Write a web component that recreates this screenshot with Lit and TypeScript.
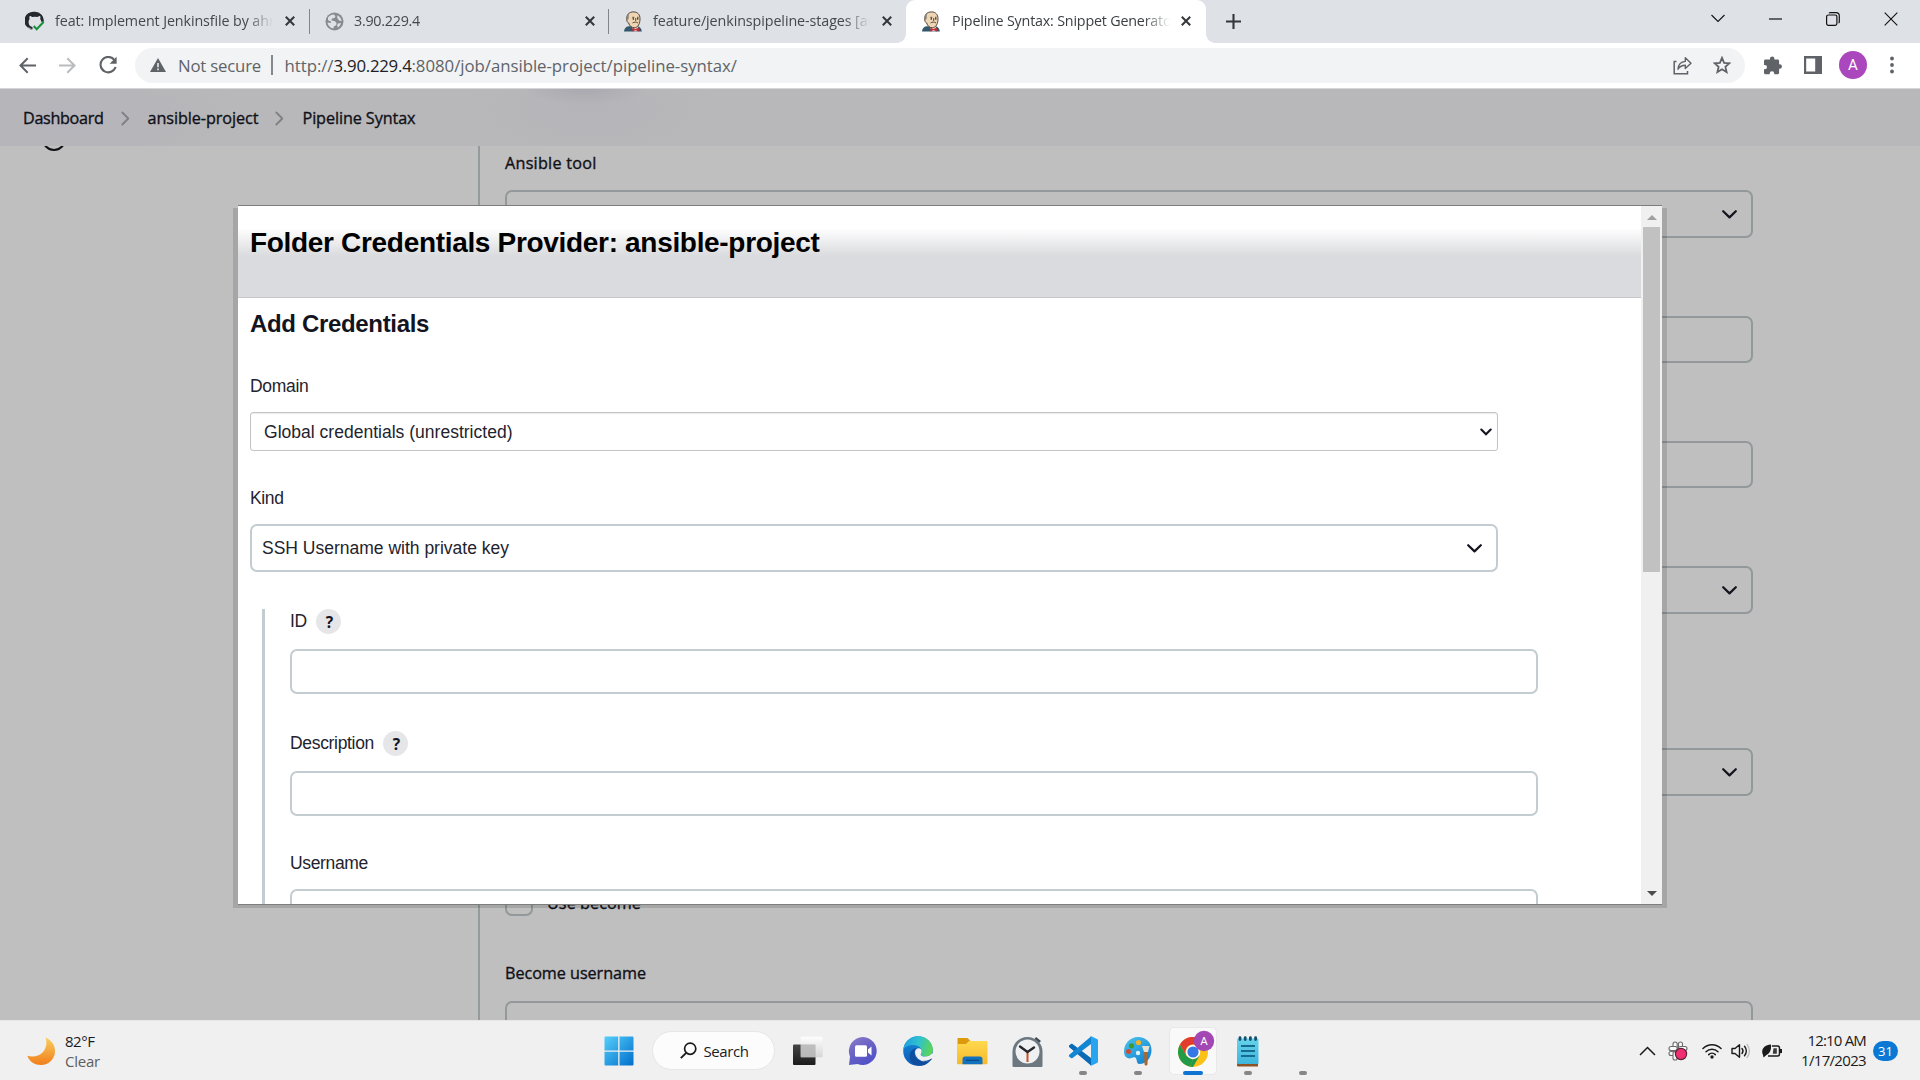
import { LitElement, html, css, svg, nothing } from "lit";
import { customElement, property } from "lit/decorators.js";

/** A single line of text whose tracking is adjusted so that it spans `w` pixels. */
@customElement("fit-text")
class FitText extends LitElement {
  @property({ type: Number }) w = 0;
  static styles = css`
    :host { display: inline-block; white-space: pre; }
    .t { display: inline-block; }
  `;
  firstUpdated() {
    if (!this.w) return;
    const n = (this.textContent ?? "").length;
    const el = this.renderRoot.querySelector(".t") as HTMLElement;
    const natural = el.getBoundingClientRect().width;
    if (n > 1 && natural > 0) this.style.letterSpacing = `${((this.w - natural) / n).toFixed(3)}px`;
  }
  render() {
    return html`<span class="t"><slot></slot></span>`;
  }
}

const icon = (w: number, h: number, body: unknown, box = `0 0 ${w} ${h}`) =>
  html`<svg width=${w} height=${h} viewBox=${box} fill="none" style="display:block;flex:none">${body}</svg>`;

const chevDown = icon(15, 9, svg`<path d="M1.2 1.2 7.5 7.4 13.8 1.2" stroke="#14141f" stroke-width="2.2" stroke-linecap="round" stroke-linejoin="round"/>`);
const chevSmall = icon(12, 8, svg`<path d="M1.3 1.5 6 6.2 10.7 1.5" stroke="#14141f" stroke-width="2.1" stroke-linecap="round"/>`);
const crumbChev = icon(9, 15, svg`<path d="M1.3 1.5 7.3 7.5 1.3 13.5" stroke="#7f7f86" stroke-width="1.8" stroke-linecap="round" stroke-linejoin="round"/>`);
const tabClose = icon(10, 10, svg`<path d="M.8.8 9.2 9.2M9.2.8.8 9.2" stroke="#33373b" stroke-width="2"/>`);

const github = icon(20, 20, svg`
  <path d="M7 18.3c-1.2.3-2.3 0-3-.8-.6-.8-1-1.6-1.8-1.9M10 .8A9 9 0 0 0 6.8 18.6c.5.1.7-.2.7-.5v-2c-2.2-.6-3.9-1.6-3.9-5.3 0-1.200.4-2.100 1-2.800-.2-.6-.4-1.800.1-2.900.9 0 1.900.5 2.600 1a9.500 9.500 0 0 1 5.200 0c.8-.5 1.700-1 2.600-1 .5 1.100.3 2.300.1 2.900.6.7 1 1.600 1 2.800l2.600 0A9 9 0 0 0 10 .8Z" fill="#24292f"/>
  <path d="m8.700 15 3 3.200 7-7.400" stroke="#1a8f3c" stroke-width="2.100"/>`);
const globe = icon(19, 19, svg`
  <circle cx="9.500" cy="9.500" r="9" fill="#868b90"/>
  <path d="M3 5.500C4.500 3.600 6.700 2.600 9 2.500l1.500 1.700-1 1.800-2.500.6-.6 2 3.200.5 2 1.800-.4 2.300-2.200 1.100-.6 2.200C5.500 16.300 3 13.600 2.500 10.500l3.400.6L6 9.400 3 8.200ZM12 3.200c2.600 1 4.300 3.100 4.700 5.800l-2.200-.3-2-2.200ZM13 11.500l3-.4c-.5 1.900-1.500 3.300-3 4.300l-.9-1.800Z" fill="#dee1e6"/>`);
const jenkins = icon(20, 21, svg`
  <path d="M1 20.500c.2-3 1.800-4.800 4.500-5.200h9c2.500.4 4 2.200 4.300 5.200Z" fill="#33576b"/>
  <path d="M8 14.500h7l-.5 5.800H11Z" fill="#f3efe9"/>
  <path d="M3.800 7.800C3.600 3.500 6.300.9 10.500.9c4.200 0 6.500 2.800 6.500 6.800 0 4.800-1.800 9-5.600 9-3 0-5-1.900-5.700-4.700-1.500-.5-2.200-2.600-1.900-4.200Z" fill="#eed6b4" stroke="#42362f" stroke-width=".9"/>
  <path d="M3.800 8C3 4.500 4.800 2.300 7 1.600 5.600 3.300 5.600 5.300 5.800 7.300L4.700 8.900Z" fill="#8b8179"/>
  <path d="M9.300 6.300h2M14 6.300h1.500M12.700 7v3M9.500 12c1.700-1.200 4-1.200 5.500 0" stroke="#5a463a" stroke-width="1"/>
  <circle cx="10.300" cy="7.900" r=".8" fill="#2e2b2b"/><circle cx="14.800" cy="7.900" r=".8" fill="#2e2b2b"/>
  <path d="m9.500 16.600 3 1.500 3.200-1.500.2 3.800-3.400-1.200-3 1.200Z" fill="#cc2f33"/>`);

interface Tab { icon: unknown; title: string; w: number; kind: string; }
const TABS: Tab[] = [
  { icon: github, title: "feat: Implement Jenkinsfile by ahm", w: 227, kind: "t1" },
  { icon: globe, title: "3.90.229.4", w: 66, kind: "t2" },
  { icon: jenkins, title: "feature/jenkinspipeline-stages [ans", w: 230, kind: "t3" },
  { icon: jenkins, title: "Pipeline Syntax: Snippet Generator", w: 225, kind: "t4" },
];

@customElement("browser-chrome")
class BrowserChrome extends LitElement {
  static styles = css`
    :host, * { box-sizing: border-box; }
    :host { display: block; flex: none; height: 89px; font-family: "Open Sans", "Noto Sans", sans-serif; }
    .strip { height: 43px; background: #dee1e6; display: flex; align-items: stretch; }
    .tab { display: flex; align-items: center; height: 43px; padding-bottom: 1px; position: relative; }
    .fav { width: 20px; display: flex; justify-content: center; }
    .title { width: 218px; margin: 0 12px 0 11px; overflow: hidden; font-size: 14.3px; color: #45494d; line-height: 22px; height: 22px;
      -webkit-mask-image: linear-gradient(90deg, #000 88%, transparent); mask-image: linear-gradient(90deg, #000 88%, transparent); }
    .t1 { width: 310px; padding-left: 25px; }
    .t1 .title { margin-left: 10px; }
    .t2 { width: 299px; padding-left: 14px; }
    .t2 .title { margin-left: 10px; width: 219px; }
    .t3 { width: 297px; padding-left: 14px; }
    .t3 .title { margin-left: 10px; width: 217px; }
    .t4 { width: 300px; padding-left: 15px; background: #fff; border-radius: 9px 9px 0 0; }
    .t4::before, .t4::after { content: ""; position: absolute; bottom: 0; width: 9px; height: 9px; }
    .t4::before { left: -9px; background: radial-gradient(circle at 0 0, transparent 8.5px, #fff 9px); }
    .t4::after { right: -9px; background: radial-gradient(circle at 9px 0, transparent 8.500px, #fff 9px); }
    .sep { width: 1px; height: 25px; background: #80868b; margin: 9px 0 0 -1px; }
    .t4 .title { color: #3c4043; margin-right: 11px; }
    .plus { margin: 14px 0 0 20px; }
    .win { margin-left: auto; display: flex; align-items: center; height: 37px; padding-right: 22px; gap: 44px; }
    .bar { height: 46px; background: #fff; border-bottom: 1px solid #d5d6d8; display: flex; align-items: center; padding: 0 22px 1px 19px; }
    .nav { display: flex; gap: 23px; align-items: center; width: 116px; }
    .pill { height: 35px; width: 1610px; border-radius: 18px; background: #f1f3f4; display: flex; align-items: center; padding: 0 14px 0 15px; font-size: 16.8px; color: #5f6368; }
    .ns { margin-left: 12px; }
    .vb { width: 1.500px; height: 20px; background: #85898d; margin: 0 12px 0 10px; }
    .url b { font-weight: 400; color: #202124; }
    .pa { margin-left: auto; display: flex; align-items: center; gap: 21px; }
    .right { display: flex; align-items: center; margin-left: 18px; gap: 22px; }
    .av { width: 28px; height: 28px; border-radius: 50%; background: #ab47bc; color: #fff; font: 15px Roboto, sans-serif; display: flex; align-items: center; justify-content: center; margin: 0 6px 0 -5px; }
    .dots { margin-left: -5px; }
  `;
  render() {
    return html`
      <div class="strip">
        ${TABS.map((t, i) => html`
          <div class="tab ${t.kind}">
            <div class="fav">${t.icon}</div>
            <div class="title"><fit-text .w=${t.w}>${t.title}</fit-text></div>
            ${tabClose}
          </div>
          ${i < 2 ? html`<div class="sep"></div>` : nothing}`)}
        <div class="plus">${icon(15, 15, svg`<path d="M7.500 0v15M0 7.500h15" stroke="#33373b" stroke-width="2.100"/>`)}</div>
        <div class="win">
          ${icon(14, 9, svg`<path d="M.5 1 7 7.500 13.500 1" stroke="#111" stroke-width="1.100"/>`)}
          ${icon(13, 2, svg`<path d="M0 1h13" stroke="#111" stroke-width="1.200"/>`)}
          ${icon(14, 14, svg`<rect x=".6" y="3" width="10.300" height="10.300" rx="1.800" stroke="#111" stroke-width="1.200"/><path d="M3 1.200C3.500.7 4 .6 4.600.6H10a3.300 3.300 0 0 1 3.300 3.300V9.500c0 .7-.2 1.200-.7 1.600" stroke="#111" stroke-width="1.200"/>`)}
          ${icon(14, 14, svg`<path d="m.7.7 12.600 12.600M13.300.7.7 13.300" stroke="#111" stroke-width="1.100"/>`)}
        </div>
      </div>
      <div class="bar">
        <div class="nav">
          ${icon(17, 17, svg`<path d="M17 8.500H1.800M8.700 1.300 1.500 8.500l7.200 7.200" stroke="#5f6368" stroke-width="2"/>`)}
          ${icon(17, 17, svg`<path d="M0 8.500h15.200M8.300 1.300l7.200 7.200-7.200 7.200" stroke="#babcbe" stroke-width="2"/>`)}
          ${icon(18, 18, svg`<path d="M15.300 3.800A7.700 7.700 0 1 0 16.600 11" stroke="#5f6368" stroke-width="2.100"/><path d="M17.600.8v7h-7Z" fill="#5f6368"/>`)}
        </div>
        <div class="pill">
          ${icon(16, 14, svg`<path d="M8 0 16 14H0Z" fill="#5f6368"/><path d="M8 5v4.200M8 10.500v1.700" stroke="#f1f3f4" stroke-width="1.500"/>`)}
          <fit-text class="ns" .w=${83}>Not secure</fit-text>
          <div class="vb"></div>
          <span class="url"><fit-text .w=${49}>http://</fit-text><b><fit-text .w=${78}>3.90.229.4</fit-text></b><fit-text .w=${325.5}>:8080/job/ansible-project/pipeline-syntax/</fit-text></span>
          <div class="pa">
            ${icon(19, 19, svg`<path d="M3.500 5.500H1.200v12.300h13.300V15" stroke="#5f6368" stroke-width="1.500"/><path d="M5 13.200C5.300 8.500 8 5.800 12.300 5.400V1.800l5.700 5.500-5.700 5.300V9.300C9.200 9.300 6.800 10.500 5 13.200Z" stroke="#5f6368" stroke-width="1.400" stroke-linejoin="round"/>`)}
            ${icon(18, 18, svg`<path d="m9 1.800 2.100 5 5.300.5-4 3.500 1.200 5.200L9 13.200 4.400 16l1.200-5.200-4-3.500 5.300-.5Z" stroke="#5f6368" stroke-width="1.800"/>`)}
          </div>
        </div>
        <div class="right">
          ${icon(19, 19, svg`<path d="M7 2.600a2.200 2.200 0 0 1 4.400 0v.9h3.200c.9 0 1.500.7 1.500 1.500v3.300h.6a2.200 2.200 0 0 1 0 4.500h-.6v4c0 .8-.6 1.500-1.500 1.500h-3.400v-.8a2.200 2.200 0 0 0-4.500 0v.8H2.500c-.8 0-1.500-.7-1.500-1.500v-3.500h.8a2.200 2.200 0 0 0 0-4.400H1V5c0-.8.700-1.500 1.500-1.500H7Z" fill="#5f6368"/>`)}
          ${icon(18, 18, svg`<path d="M0 0h18v18H0ZM2.200 2.400v13.200h9V2.400Z" fill="#5f6368" fill-rule="evenodd"/>`)}
          <div class="av">A</div>
          <div class="dots">${icon(4, 18, svg`<circle cx="2" cy="2.500" r="1.900" fill="#5f6368"/><circle cx="2" cy="9" r="1.900" fill="#5f6368"/><circle cx="2" cy="15.500" r="1.900" fill="#5f6368"/>`)}</div>
        </div>
      </div>`;
  }
}

@customElement("job-page")
class JobPage extends LitElement {
  static styles = css`
    :host, * { box-sizing: border-box; }
    :host { display: flex; flex: none; flex-direction: column; height: 931px; overflow: hidden; background: #bfbfbf; color: #101018; font: 16.2px "Open Sans", "Noto Sans", sans-serif; -webkit-text-stroke: 0.35px #101018; }
    .crumbs { height: 57px; flex: none; display: flex; align-items: center; padding: 1px 0 0 23px;
      background: radial-gradient(ellipse 62px 16px at 585px 0, #abaab0 10%, transparent), radial-gradient(ellipse 130px 50px at 590px 20px, #b5b4b9, transparent), radial-gradient(ellipse 180px 60px at 70px 30px, #b4b4ba, transparent), #b8b8ba; }
    .c1 { margin: 0 18px 0 17px; }
    .body { flex: 1; display: flex; min-height: 0; }
    .side { width: 478px; padding-left: 42px; overflow: hidden; }
    .arc { width: 24px; height: 24px; border: 2px solid #101018; border-radius: 50%; margin-top: -19px; }
    .form { flex: 1; border-left: 2px solid #959b9d; padding: 5px 167px 0 25px; display: flex; flex-direction: column; height: 874px; overflow: hidden; }
    .lab { height: 24px; line-height: 24px; flex: none; }
    .box { flex: none; border: 2px solid #93999b; border-radius: 7px; height: 47px; margin-top: 78px; display: flex; align-items: center; justify-content: flex-end; padding-right: 14px; }
    .sel { height: 48px; }
    .first { margin-top: 15px; }
    .far { margin-top: 134px; }
    .last { margin-top: 16px; }
    .chk { display: flex; flex: none; height: 28px; margin-top: 92px; gap: 14px; }
    .cb { width: 28px; height: 28px; border: 2px solid #93999b; border-radius: 7px; }
    .chk span { line-height: 31px; }
    .second { margin-top: 45px; }
  `;
  render() {
    return html`
      <div class="crumbs">
        <fit-text .w=${80.5}>Dashboard</fit-text><div class="c1">${crumbChev}</div>
        <fit-text .w=${111}>ansible-project</fit-text><div class="c1">${crumbChev}</div>
        <fit-text .w=${113}>Pipeline Syntax</fit-text>
      </div>
      <div class="body">
        <div class="side"><div class="arc"></div></div>
        <div class="form">
          <div class="lab"><fit-text .w=${91.5}>Ansible tool</fit-text></div>
          <div class="box sel first">${chevDown}</div>
          <div class="box"></div>
          <div class="box"></div>
          <div class="box sel">${chevDown}</div>
          <div class="box sel far">${chevDown}</div>
          <div class="chk"><div class="cb"></div><span><fit-text .w=${94}>Use become</fit-text></span></div>
          <div class="lab second"><fit-text .w=${141}>Become username</fit-text></div>
          <div class="box sel last"></div>
        </div>
      </div>`;
  }
}

@customElement("credentials-dialog")
class CredentialsDialog extends LitElement {
  static styles = css`
    :host, * { box-sizing: border-box; }
    :host { display: flex; width: 1424px; height: 700px; border-top: 1px solid #7d7d7d; border-bottom: 1px solid #7d7d7d; background: #fff; color: #23232e; font: 17.5px "Liberation Sans", Arial, sans-serif; }
    .main { width: 1403px; height: 698px; overflow: hidden; }
    .head { height: 92px; border-bottom: 1px solid #c6c6c8; background: linear-gradient(#fff 22px, #dadbde 50px); padding: 21px 0 0 12px; font-size: 28px; line-height: 32px; font-weight: 700; color: #000; }
    .body { padding: 0 0 0 12px; display: flex; flex-direction: column; }
    h2 { margin: 12px 0 0; height: 28px; line-height: 28px; font-size: 24px; font-weight: 700; color: #14141f; }
    .lab { height: 24px; line-height: 24px; display: flex; align-items: center; }
    .d { margin-top: 36px; }
    .k { margin-top: 35px; }
    .dom { margin-top: 14px; width: 1248px; height: 39px; border: 1px solid #c4c4c4; border-radius: 3px; box-shadow: inset 0 1px 1px rgba(0,0,0,.08); display: flex; align-items: center; justify-content: space-between; padding: 1px 5px 0 13px; }
    .box { width: 1248px; height: 45px; border: 2px solid #c3ccd0; border-radius: 7px; display: flex; align-items: center; justify-content: space-between; flex: none; }
    .kind { height: 48px; margin-top: 14px; padding: 0 14px 0 10px; }
    .nest { margin: 37px 0 0 12px; border-left: 3px solid #c3ccd0; padding-left: 25px; height: 296px; overflow: hidden; }
    .row { height: 25px; display: flex; align-items: center; gap: 9px; }
    .row + .box { margin-top: 15px; }
    .row.more { margin-top: 37px; }
    .row.user { margin-top: 35px; height: 24px; }
    .row.user + .box { margin-top: 14px; }
    .q { width: 25px; height: 25px; border-radius: 50%; background: #e6e6e9; display: flex; align-items: center; justify-content: center; font: 700 15.500px "Open Sans", sans-serif; color: #14141f; padding-left: 2px; }
    .scroll { width: 21px; background: #f0f0f0; display: flex; flex-direction: column; align-items: center; padding: 9px 0 8px; justify-content: space-between; }
    .thumb { width: 17px; height: 345px; background: #c1c1c1; margin: 7px 0 auto; }
  `;
  render() {
    return html`
      <div class="main">
        <div class="head"><fit-text .w=${569.5}>Folder Credentials Provider: ansible-project</fit-text></div>
        <div class="body">
          <h2><fit-text .w=${179}>Add Credentials</fit-text></h2>
          <div class="lab d"><fit-text .w=${58.5}>Domain</fit-text></div>
          <div class="dom"><fit-text .w=${248.5}>Global credentials (unrestricted)</fit-text>${chevSmall}</div>
          <div class="lab k"><fit-text .w=${33.5}>Kind</fit-text></div>
          <div class="box kind"><fit-text .w=${247}>SSH Username with private key</fit-text>${chevDown}</div>
          <div class="nest">
            <div class="row"><fit-text .w=${17}>ID</fit-text><div class="q">?</div></div>
            <div class="box"></div>
            <div class="row more"><fit-text .w=${84}>Description</fit-text><div class="q">?</div></div>
            <div class="box"></div>
            <div class="row user"><fit-text .w=${78}>Username</fit-text></div>
            <div class="box"></div>
          </div>
        </div>
      </div>
      <div class="scroll">
        ${icon(10, 5, svg`<path d="M0 5 5 0l5 5Z" fill="#a0a0a0"/>`)}
        <div class="thumb"></div>
        ${icon(10, 5, svg`<path d="M0 0h10L5 5Z" fill="#4d4d4d"/>`)}
      </div>`;
  }
}

const A = {
  start: icon(30, 30, svg`<defs><linearGradient id="w2" gradientUnits="userSpaceOnUse" x1="0" y1="0" x2="30" y2="30"><stop stop-color="#55d0fb"/><stop offset="1" stop-color="#006dcb"/></linearGradient></defs><path d="M1.500.5h12.700v14H.5V1.500a1 1 0 0 1 1-1ZM15.500.5h13a1 1 0 0 1 1 1v13h-14ZM.5 15.700h13.700v13.800H1.500a1 1 0 0 1-1-1ZM15.500 15.700h14v12.800a1 1 0 0 1-1 1h-13Z" fill="url(#w2)"/>`),
  task: icon(30, 30, svg`<defs><linearGradient id="tk" x2="0" y2="1"><stop stop-color="#454545"/><stop offset="1" stop-color="#1c1c1c"/></linearGradient><linearGradient id="tl" x2="0" y2="1"><stop stop-color="#fff"/><stop offset="1" stop-color="#d2d2d2"/></linearGradient></defs><rect x="0" y="8.500" width="22.500" height="20.500" rx="1" fill="url(#tk)"/><rect x="7.700" y=".8" width="22" height="20.500" rx="1" fill="url(#tl)" opacity=".88"/><path d="M7.700 8.500h14.800v12.800H7.700Z" fill="#b5b5b5" opacity=".75"/>`),
  chat: icon(30, 30, svg`<defs><linearGradient id="ch" x2=".6" y2="1"><stop stop-color="#8c7ccb"/><stop offset=".5" stop-color="#6b64c4"/><stop offset="1" stop-color="#5050c8"/></linearGradient></defs><path d="M15 1a14 14 0 1 1-5.500 27L1 29l1-8.500A14 14 0 0 1 15 1Z" fill="url(#ch)"/><rect x="7" y="9.300" width="12" height="11.500" rx="1.500" fill="#fff"/><path d="m20 13.500 3.500-3v9l-3.500-3Z" fill="#fff"/>`),
  edge: icon(30, 30, svg`<defs><linearGradient id="e1" y1=".3" y2=".5"><stop stop-color="#1f9fe0"/><stop offset=".5" stop-color="#2fc2cf"/><stop offset="1" stop-color="#5ed64e"/></linearGradient><linearGradient id="e2" x2="0" y2="1"><stop stop-color="#178bdd"/><stop offset="1" stop-color="#0c5bb3"/></linearGradient></defs><circle cx="15" cy="15" r="14.800" fill="url(#e2)"/><path d="M.3 14C1 6 7 .2 15 .2c8.500 0 14.800 6 14.800 13.300 0 4.500-3.500 7-7.300 7-3.500 0-5-1.300-4.500-2.500 1.200-1.500 1.300-3.300.3-5C15.500 7.500 3.500 7.500.3 14Z" fill="url(#e1)"/><path d="M11.500 16.500c0 6 5 9.500 10.500 9.200 3-.2 5-1.500 6-2-2.500 4-7 6.300-12 6.100C8 29 5.500 22 7 17.500c1-3.500 4-5 6.500-5.500-1.300 1.200-2 2.700-2 4.500Z" fill="#114d9f"/><path d="M12 16c.3-3 3.500-5 6-3 1 1.600 1 3.500-.2 5-.5 1.200 1 2.500 4.500 2.500 2.800 0 5-1 6.500-3l2 0-.8 3.500-2 3.200c-1.500.8-3.500 1.300-6 1.300-5-.2-10-4-10-9.500Z" fill="#f0f0f0"/><path d="M20 24.700c3 .3 6-.5 8.500-2.300l.5.7c-1 1.800-4 3-6.500 3Z" fill="#114d9f"/>`),
  folder: icon(31, 28, svg`<defs><linearGradient id="fo" x2="0" y2="1"><stop stop-color="#ffd94f"/><stop offset="1" stop-color="#f6b92a"/></linearGradient></defs><path d="M1 1h9.500l3 3v6H.5V1.500Z" fill="#dd9a0d"/><path d="M0 7h9l3-3h17c1 0 1.500.5 1.500 1.500V26c0 .8-.5 1.300-1.300 1.300H1.500C.6 27.300 0 26.800 0 26Z" fill="url(#fo)"/><path d="M5.500 27.300V22c0-1.500 1-2.500 2.500-2.500h15c1.500 0 2.500 1 2.500 2.500v5.300Z" fill="#1272bf"/><path d="M9 23.300h13" stroke="#0a4c8a" stroke-width="1.300"/>`),
  clock: icon(31, 31, svg`<path d="m24 1 5 4-3 3-4-4Z" fill="#3e454c"/><path d="M15.500 1C7 1 .5 7.500.5 15.500V30a1 1 0 0 0 1 1h28a1 1 0 0 0 1-1V15.500C30.500 7.500 24 1 15.500 1Z" fill="#6d7780"/><circle cx="15.500" cy="15.500" r="12" fill="#eef0f1"/><path d="M15.500 16v10" stroke="#c5512b" stroke-width="2"/><path d="M8 10.500 15.500 16l6.500-4.500" stroke="#26292c" stroke-width="2.400" stroke-linecap="round"/>`),
  code: icon(30, 30, svg`<path d="M1 9.500 3 8c.5-.4 1-.3 1.500 0L23 22v7.500L1 11Z" fill="#0a6ab6"/><path d="M1 20.500 3 22c.5.4 1 .3 1.500 0L23 8V.5L1 19Z" fill="#1286d2"/><path d="M22 .3c.4-.3.800-.3 1.200-.1L29 3c.6.300 1 .8 1 1.500v21c0 .7-.4 1.200-1 1.500l-5.800 2.800c-.5.2-1 .1-1.400-.2.700.4 1.200 0 1.200-.8V1.200c0-.8-.4-1.200-1-.9Z" fill="#29a4ee"/>`),
  paint: icon(30, 30, svg`<defs><linearGradient id="pa" x2=".8" y2="1"><stop stop-color="#4cc5ee"/><stop offset="1" stop-color="#1382d1"/></linearGradient></defs><path d="M15 1c8 0 13.500 5.500 13.500 13 0 8-5.500 14-12 14-3.500 0-2-4.500-4-6.300C10.500 20 8 23.500 4.500 22 2 21 1 18.500 1 15.500 1 7.500 7 1 15 1Z" fill="url(#pa)"/><circle cx="8.500" cy="9.800" r="2.600" fill="#3b9b32"/><circle cx="15.500" cy="6.500" r="2.600" fill="#f3b32b"/><circle cx="5.500" cy="15.500" r="2.500" fill="#cf4c33"/><circle cx="15" cy="17" r="2.200" fill="#dff3fb"/><path d="M19 10h7.500l-1.500 6h-4Z" fill="#e8e1d3"/><path d="M21 16h4l-.5 12c0 2-3 2-3 0Z" fill="#a8682e"/>`),
  chrome: icon(37, 38, svg`<circle cx="15" cy="23" r="15" fill="#fbc116"/><path d="M2 15.500 8.500 26.800 15 30.500l-3 7.200A15 15 0 0 1 2 15.500Z" fill="#229a48"/><path d="m21.500 26.800-6.500 11.200-3-.3L15 30Z" fill="#229a48"/><path d="M2 15.500C6 8 15 6 22 10l6 5.500H15a7.500 7.500 0 0 0-6.500 11.300Z" fill="#e33b2e"/><circle cx="15" cy="23" r="7.200" fill="#fff"/><circle cx="15" cy="23" r="5.600" fill="#3677e6"/><circle cx="26" cy="12" r="10.200" fill="#a347b4"/><text x="26" y="16" font-family="Roboto, sans-serif" font-size="11.500" fill="#fff" text-anchor="middle">A</text>`),
  notes: icon(24, 31, svg`<path d="M1 27h21v3.500H2a1 1 0 0 1-1-1Z" fill="#8c5425"/><defs><linearGradient id="no" x2="0" y2="1"><stop stop-color="#68d3ec"/><stop offset="1" stop-color="#3db5dc"/></linearGradient></defs><rect x="1" y="2.500" width="21.500" height="25.500" rx="1" fill="url(#no)"/><path d="M5 10h14M5 15h14M5 20h14" stroke="#156c8e" stroke-width="1.900"/><path d="M4 1.600v2M9.200 1.600v2M14.400 1.600v2M19.600 1.600v2" stroke="#134f6d" stroke-width="2.800" stroke-linecap="round"/>`),
};

interface App { pic: unknown; mark?: string; tile?: boolean; }
const APPS: App[] = [
  { pic: A.task }, { pic: A.chat }, { pic: A.edge }, { pic: A.folder }, { pic: A.clock },
  { pic: A.code, mark: "dot" }, { pic: A.paint, mark: "dot" }, { pic: A.chrome, mark: "on", tile: true },
  { pic: A.notes, mark: "dot" }, { pic: nothing, mark: "dot" },
];

@customElement("task-bar")
class TaskBar extends LitElement {
  static styles = css`
    :host, * { box-sizing: border-box; }
    :host { display: flex; flex: none; height: 60px; background: #f0f0f0; border-top: 1px solid #e6e6e6; align-items: center; font: 15px "Open Sans", "Noto Sans", sans-serif; color: #1b1b1b; }
    .weather { width: 604px; display: flex; align-items: center; padding-left: 27px; gap: 10px; }
    .two { display: flex; flex-direction: column; }
    .two > * { height: 20px; line-height: 20px; }
    .weather .two { padding-top: 1px; }
    .dim { color: #5e5e5e; }
    .search { width: 123px; height: 39px; margin: 0 5px 0 18px; border-radius: 20px; background: #fcfcfc; border: 1px solid #e6e6e6; display: flex; align-items: center; justify-content: center; gap: 7px; padding-left: 1px; }
    .apps { display: flex; }
    .app { width: 55px; height: 59px; padding: 6px 3.500px 0; display: flex; flex-direction: column; }
    .tile { width: 48px; height: 48px; display: flex; align-items: center; justify-content: center; border-radius: 5px; }
    .tile.on { background: #f9f9f9; border: 1px solid #e8e8e8; align-items: flex-start; justify-content: flex-start; padding: 1px 0 0 8px; }
    .m { height: 4px; border-radius: 2px; margin: -4px auto 0; z-index: 1; }
    .dot { width: 8px; background: #868686; }
    .on.m { width: 20px; background: #0f74d1; }
    .tray { margin-left: auto; display: flex; align-items: center; padding-right: 22px; }
    .g1 { margin-right: 12px; }
    .g2 { margin-right: 14px; }
    .g3 { margin-right: 9px; }
    .g4 { margin-right: 11px; }
    .g5 { margin-right: 9px; }
    .clock { align-items: flex-end; width: 74px; margin-top: -1px; }
    .badge { width: 25px; height: 20px; border-radius: 10px; background: #0a78d4; color: #fff; font-size: 13px; display: flex; align-items: center; justify-content: center; margin-left: 7px; }
  `;
  render() {
    return html`
      <div class="weather">
        ${icon(28, 28, svg`<defs><linearGradient id="mo" x2="0" y2="1"><stop stop-color="#f8cf5e"/><stop offset="1" stop-color="#f17e1b"/></linearGradient></defs><path d="M18.500.5C25 3.500 28 8.500 28 14a14 14 0 0 1-14 14C8 28 2.500 25 .3 18.800 6 20.500 12 19 15.500 15.500 19.500 11.500 20.300 5.500 18.500.5Z" fill="url(#mo)"/>`)}
        <div class="two"><fit-text .w=${29.5}>82°F</fit-text><fit-text class="dim" .w=${35}>Clear</fit-text></div>
      </div>
      ${A.start}
      <div class="search">
        ${icon(17, 17, svg`<circle cx="10.200" cy="6.700" r="5.600" stroke="#1b1b1b" stroke-width="1.700"/><path d="M6.200 10.800.8 16.200" stroke="#1b1b1b" stroke-width="1.900"/>`)}
        <fit-text .w=${45}>Search</fit-text>
      </div>
      <div class="apps">
        ${APPS.map((a) => html`<div class="app">
          <div class="tile ${a.tile ? "on" : ""}">${a.pic}</div>
          ${a.mark ? html`<div class="m ${a.mark}"></div>` : nothing}
        </div>`)}
      </div>
      <div class="tray">
        <div class="g1">${icon(17, 10, svg`<path d="M1 9 8.500 1.500 16 9" stroke="#1b1b1b" stroke-width="1.500"/>`)}</div>
        <div class="g2">${icon(20, 20, svg`<g stroke="#6b6b6b" stroke-width="1.100" fill="#fafafa"><rect x="5" y="1" width="4.200" height="8.500" rx="2.100"/><rect x="1" y="10.500" width="8.200" height="4" rx="2"/><rect x="10.500" y="1" width="4" height="8.500" rx="2"/><rect x="10.500" y="5.500" width="8.500" height="4" rx="2"/><rect x="1" y="5.500" width="8.200" height="4" rx="2"/><rect x="5" y="10.500" width="4.200" height="8.500" rx="2.100"/></g><circle cx="13" cy="13" r="5.600" fill="#f02e72" stroke="#5c2338" stroke-width="1.200"/>`)}</div>
        <div class="g3">${icon(20, 16, svg`<g stroke="#1b1b1b" stroke-width="1.500" stroke-linecap="round"><path d="M1 5.500a12.700 12.700 0 0 1 18 0"/><path d="M4 8.700a8.500 8.500 0 0 1 12 0"/><path d="M6.700 11.600a4.700 4.700 0 0 1 6.600 0"/></g><circle cx="10" cy="14" r="1.700" fill="#1b1b1b"/>`)}</div>
        <div class="g4">${icon(20, 16, svg`<path d="M1 5.500h3L8.500 1.700v12.600L4 10.500H1Z" stroke="#1b1b1b" stroke-width="1.400" stroke-linejoin="round"/><path d="M11 5.500a4 4 0 0 1 0 5M13.500 3.300a7 7 0 0 1 0 9.400" stroke="#1b1b1b" stroke-width="1.400" stroke-linecap="round"/><path d="M16 1.500a10 10 0 0 1 0 13" stroke="#bdbdbd" stroke-width="1.300" stroke-linecap="round"/>`)}</div>
        <div class="g5">${icon(21, 16, svg`<path d="M10 3h5.500c1.400 0 2 .7 2 2v6c0 1.300-.6 2-2 2H6" stroke="#1b1b1b" stroke-width="1.500"/><path d="M18 6h2v4h-2Z" fill="#1b1b1b"/><path d="M11.500 5.200h3.300v5.600h-4Z" fill="#1b1b1b" opacity=".85"/><path d="M1 5.500C3 2.500 6 1.500 9 1.500 9.500 6 8.500 10 4.500 12L1.500 14.500 1 12C-.2 9.800 0 7.500 1 5.500Z" fill="#1b1b1b"/>`)}</div>
        <div class="two clock"><fit-text .w=${58.5}>12:10 AM</fit-text><fit-text .w=${65}>1/17/2023</fit-text></div>
        <div class="badge">31</div>
      </div>`;
  }
}

@customElement("app-root")
class AppRoot extends LitElement {
  static styles = css`
    :host { display: flex; flex-direction: column; width: 1920px; height: 1080px; overflow: hidden; position: relative; }
    .shade { position: absolute; left: 233px; top: 208px; width: 1434px; height: 700px; background: rgba(0, 0, 0, 0.13); }
    .dialog { position: absolute; left: 238px; top: 205px; }
  `;
  render() {
    return html`
      <browser-chrome></browser-chrome>
      <job-page></job-page>
      <div class="shade"></div>
      <credentials-dialog class="dialog"></credentials-dialog>
      <task-bar></task-bar>`;
  }
}
